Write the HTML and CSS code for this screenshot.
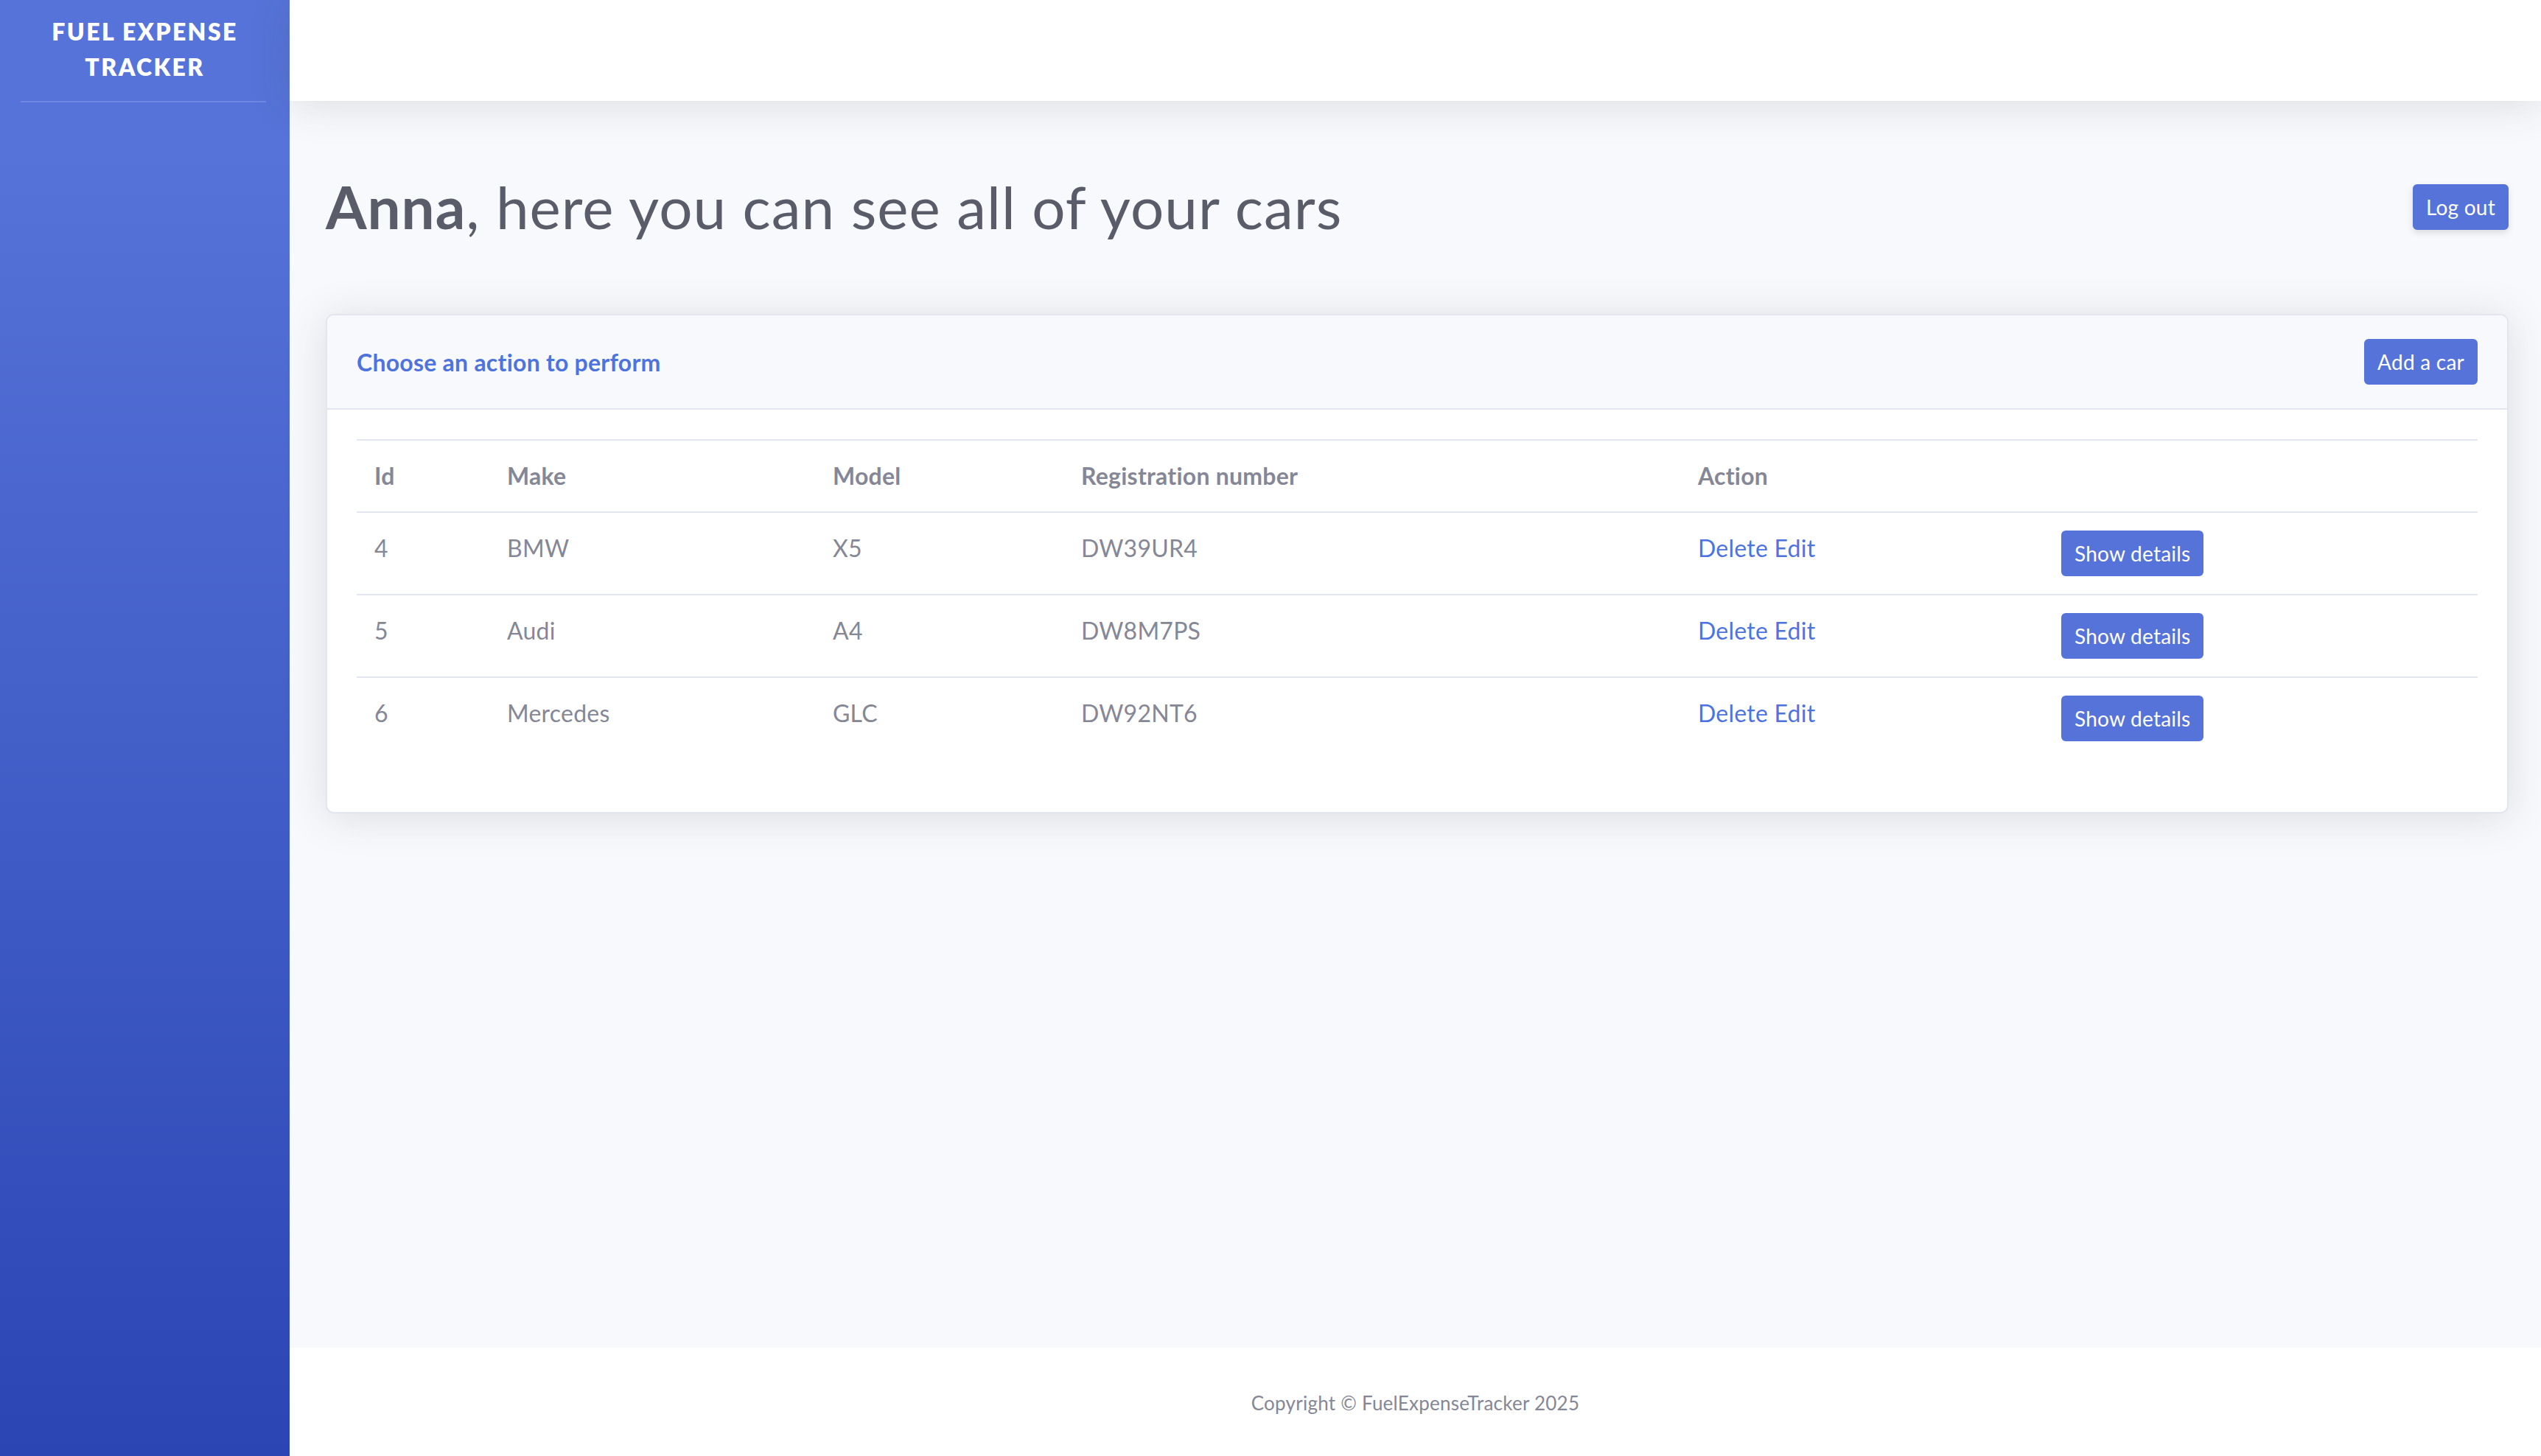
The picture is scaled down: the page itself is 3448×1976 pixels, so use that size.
FILE: index.html
```html
<!DOCTYPE html>
<html lang="en">
<head>
<meta charset="utf-8">
<title>Fuel Expense Tracker</title>
<link rel="stylesheet" href="styles.css">
</head>
<body>
<div class="wrapper">
  <aside class="sidebar">
    <a class="brand" href="#">Fuel Expense<br>Tracker</a>
    <hr class="sidebar-divider">
  </aside>
  <div class="content-wrapper">
    <header class="topbar"></header>
    <main class="main">
      <div class="page-heading">
        <h1 class="title"><strong>Anna</strong>, here you can see all of your cars</h1>
        <a class="btn" href="#">Log out</a>
      </div>
      <section class="card">
        <div class="card-header">
          <h6 class="card-title">Choose an action to perform</h6>
          <a class="btn" href="#">Add a car</a>
        </div>
        <div class="card-body">
          <table class="table">
            <thead>
              <tr><th>Id</th><th>Make</th><th>Model</th><th>Registration number</th><th>Action</th><th></th></tr>
            </thead>
            <tbody>
              <tr><td>4</td><td>BMW</td><td>X5</td><td>DW39UR4</td><td><a class="link" href="#">Delete</a> <a class="link" href="#">Edit</a></td><td><a class="btn" href="#">Show details</a></td></tr>
              <tr><td>5</td><td>Audi</td><td>A4</td><td>DW8M7PS</td><td><a class="link" href="#">Delete</a> <a class="link" href="#">Edit</a></td><td><a class="btn" href="#">Show details</a></td></tr>
              <tr><td>6</td><td>Mercedes</td><td>GLC</td><td>DW92NT6</td><td><a class="link" href="#">Delete</a> <a class="link" href="#">Edit</a></td><td><a class="btn" href="#">Show details</a></td></tr>
            </tbody>
          </table>
        </div>
      </section>
    </main>
    <footer class="footer">
      <span>Copyright © FuelExpenseTracker 2025</span>
    </footer>
  </div>
</div>
</body>
</html>
```
FILE: styles.css
```css
* { box-sizing: border-box; }
html, body { margin: 0; padding: 0; }
body {
  font-family: Lato, "Noto Sans", sans-serif;
  letter-spacing: 0.015em;
  color: #858796;
  background: #f8f9fc;
}
a { text-decoration: none; }

.wrapper { display: flex; min-height: 1976px; }

.sidebar {
  width: 393px;
  flex: 0 0 393px;
  background-color: #5673d9;
  background-image: linear-gradient(180deg, #5673d9 10%, #2b46b3 100%);
  display: flex;
  flex-direction: column;
}
.brand {
  display: block;
  height: 137px;
  padding-top: 19px;
  text-align: center;
  color: #fff;
  font-weight: 800;
  font-size: 32px;
  line-height: 48px;
  letter-spacing: 2.4px;
  text-transform: uppercase;
}
.sidebar-divider {
  margin: 0 32px 0 28px;
  border: 0;
  border-top: 2px solid rgba(255,255,255,.15);
}

.content-wrapper {
  flex: 1;
  display: flex;
  flex-direction: column;
  background: #f8f9fc;
}
.topbar {
  height: 137px;
  background: #fff;
  box-shadow: 0 5px 56px 0 rgba(58,59,69,.15);
  position: relative;
  z-index: 1;
}
.main {
  flex: 1;
  padding: 95px 44px 0 49px;
}
.page-heading {
  display: flex;
  align-items: center;
  justify-content: space-between;
  height: 96px;
  margin-bottom: 98px;
}
.title {
  margin: 0;
  font-size: 80px;
  line-height: 96px;
  font-weight: 400;
  letter-spacing: 1px;
  color: #5a5c69;
}
.title strong { font-weight: 700; }

.btn {
  display: inline-block;
  background: #5673d9;
  border: 2px solid #5673d9;
  color: #fff;
  font-size: 28px;
  line-height: 42px;
  padding: 8px 16px;
  border-radius: 6px;
}
.page-heading .btn { box-shadow: 0 4px 8px rgba(58,59,69,.15); margin-top: 2px; }

.card {
  background: #fff;
  border: 2px solid #e3e6f0;
  border-radius: 11px;
  box-shadow: 0 5px 56px 0 rgba(58,59,69,.15);
  overflow: hidden;
}
.card-header {
  display: flex;
  align-items: center;
  justify-content: space-between;
  padding: 32px 40px;
  background: #f8f9fc;
  border-bottom: 2px solid #e3e6f0;
}
.card-title {
  margin: 0;
  font-size: 32px;
  font-weight: 700;
  color: #4e73df;
}
.card-body { padding: 40px; }

.table {
  width: 100%;
  border-collapse: collapse;
  table-layout: fixed;
  margin-bottom: 32px;
  font-size: 32px;
  line-height: 48px;
  color: #858796;
}
.table th, .table td {
  padding: 24px;
  text-align: left;
  vertical-align: top;
  border-top: 2px solid #e3e6f0;
}
.table th { font-weight: 700; }
.table th:nth-child(1) { width: 180px; }
.table th:nth-child(2) { width: 442px; }
.table th:nth-child(3) { width: 337px; }
.table th:nth-child(4) { width: 837px; }
.table th:nth-child(5) { width: 493px; }
.table th:nth-child(6) { width: 589px; }
.link { color: #4e73df; }

.footer {
  height: 147px;
  background: #fff;
  display: flex;
  align-items: center;
  justify-content: center;
  font-size: 26px;
  line-height: 26px;
  color: #858796;
  padding-top: 2px;
}
```
